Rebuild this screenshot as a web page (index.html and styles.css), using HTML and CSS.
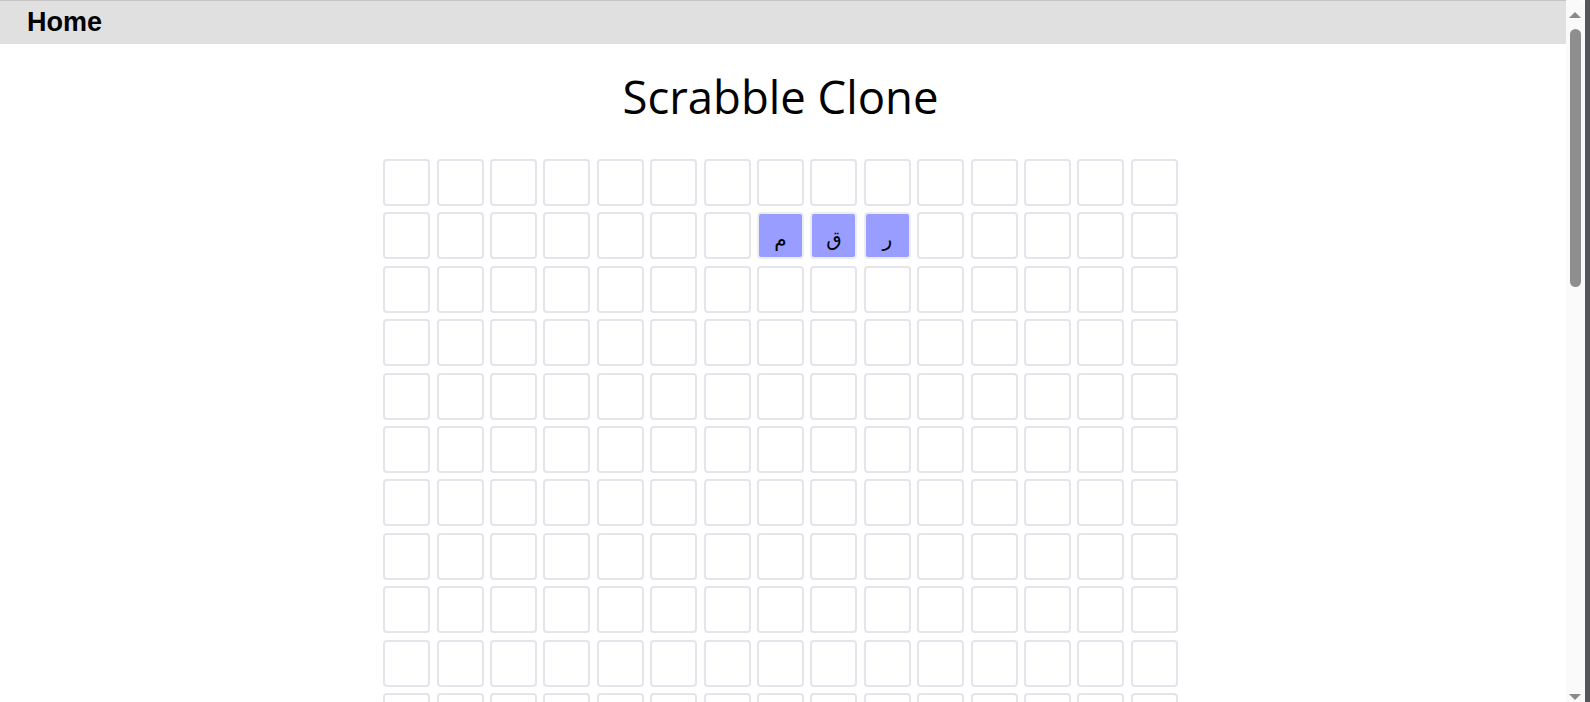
FILE: index.html
```html
<!DOCTYPE html>
<html lang="en">
<head>
<meta charset="utf-8">
<title>Scrabble Clone</title>
<link rel="stylesheet" href="styles.css">
</head>
<body>
<div class="window">
  <div class="viewport">
    <nav class="topbar"><a class="home-link" href="#">Home</a></nav>
    <main class="page">
      <h1 class="title">Scrabble Clone</h1>
      <div class="board" id="board"></div>
    </main>
  </div>
  <div class="scrollbar" aria-hidden="true">
    <div class="sb-arrow sb-up"></div>
    <div class="sb-track"><div class="sb-thumb"></div></div>
    <div class="sb-arrow sb-down"></div>
  </div>
  <div class="frame-edge"></div>
</div>
<script>
  var board = document.getElementById('board');
  var tiles = { '1-7': 'م', '1-8': 'ق', '1-9': 'ر' };
  for (var r = 0; r < 15; r++) {
    for (var c = 0; c < 15; c++) {
      var cell = document.createElement('div');
      var key = r + '-' + c;
      if (tiles[key]) {
        cell.className = 'cell tile';
        cell.textContent = tiles[key];
      } else {
        cell.className = 'cell';
      }
      board.appendChild(cell);
    }
  }
</script>
</body>
</html>
```
FILE: styles.css
```css
html, body {
  margin: 0;
  padding: 0;
  background: #ffffff;
  height: 100%;
  overflow: hidden;
}

body {
  font-family: "Open Sans", "DejaVu Sans", sans-serif;
  color: #000;
}

.window {
  display: flex;
  height: 100vh;
  overflow: hidden;
}

.viewport {
  flex: 1;
  min-width: 0;
  overflow: hidden;
}

.topbar {
  background: #e0e0e0;
  border-top: 1px solid #c4c4c4;
  height: 43px;
  display: flex;
  align-items: center;
  padding-left: 27px;
}

.home-link {
  font-family: "Liberation Sans", Arial, sans-serif;
  font-weight: bold;
  font-size: 27px;
  color: #000;
  text-decoration: none;
  line-height: 1;
}

.page {
  display: flex;
  flex-direction: column;
  align-items: center;
  padding-right: 5px;
}

.title {
  font-family: "Open Sans", sans-serif;
  font-weight: 400;
  font-size: 45.5px;
  line-height: 60px;
  margin: 22px 0 33px;
}

.board {
  display: grid;
  grid-template-columns: repeat(15, 47px);
  grid-auto-rows: 47px;
  gap: 6.4px;
  margin-bottom: 40px;
}

.cell {
  box-sizing: border-box;
  border: 2px solid #e4e4ea;
  border-radius: 4px;
  background: #fff;
  display: flex;
  align-items: center;
  justify-content: center;
  font-family: "DejaVu Sans", sans-serif;
  font-size: 20px;
}

.tile {
  background: #999dff;
  border-color: #ececf4;
  padding-top: 6px;
}

/* window scrollbar chrome */
.scrollbar {
  width: 19px;
  flex: none;
  background: #fafafa;
  border-top-right-radius: 6px;
  display: flex;
  flex-direction: column;
  align-items: flex-start;
}

.sb-arrow {
  width: 0;
  height: 0;
  margin-left: 3px;
  border-left: 6.5px solid transparent;
  border-right: 6.5px solid transparent;
}

.sb-up {
  margin-top: 12px;
  border-bottom: 6px solid #8a8a8a;
}

.sb-down {
  margin-bottom: 2px;
  border-top: 6px solid #8a8a8a;
}

.sb-track {
  flex: 1;
  width: 100%;
  padding-top: 11px;
}

.sb-thumb {
  margin-left: 4px;
  width: 11px;
  height: 258px;
  border-radius: 6px;
  background: #8e8e8e;
}

.frame-edge {
  width: 5px;
  flex: none;
  background: #55565a;
}
```
